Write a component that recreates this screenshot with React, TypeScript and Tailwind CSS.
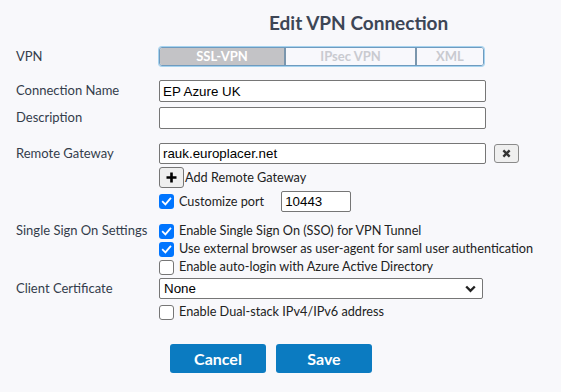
import React from "react";

const labelCls =
  "w-[159px] shrink-0 pl-[16px] text-[13px] text-[#343d4b] font-['Lato',sans-serif]";
const inputCls =
  "h-full border border-[#767676] rounded-[2px] bg-white px-[3px] text-[13.33px] text-black font-['Liberation_Sans',Arial,sans-serif] outline-none";
const optText = "text-[12.7px] text-[#222] font-['Lato',sans-serif] ml-[5px]";

function Check({ checked }: { checked: boolean }) {
  return checked ? (
    <span className="w-[15px] h-[15px] rounded-[3px] bg-[#0075ff] flex items-center justify-center shrink-0">
      <svg width="11" height="11" viewBox="0 0 12 12">
        <path d="M2 6.4 L4.8 9.2 L10.2 2.8" fill="none" stroke="white" strokeWidth="2" strokeLinecap="square" />
      </svg>
    </span>
  ) : (
    <span className="w-[15px] h-[15px] rounded-[3px] bg-white border border-[#767676] shrink-0" />
  );
}

function CheckRow({ checked, label, cls = "h-[18px]" }: { checked: boolean; label: string; cls?: string }) {
  return (
    <div className={`flex items-center ${cls}`}>
      <Check checked={checked} />
      <span className={optText}>{label}</span>
    </div>
  );
}

export default function App() {
  return (
    <div className="w-[561px] h-[392px] bg-[#f8f8fb] font-['Lato',sans-serif] overflow-hidden">
      <h1 className="pt-[11px] pl-[269px] text-[19px] leading-[24px] font-bold text-[#3d4656]">
        Edit VPN Connection
      </h1>

      {/* VPN */}
      <div className="mt-[12px] flex items-center h-[19px]">
        <div className={labelCls}>VPN</div>
        <div className="flex h-full w-[325px] rounded-[3px] border border-[#6f9bbf] shadow-[0_0_0_1px_#a6d3ef] overflow-hidden text-[13px] font-bold">
          <div className="w-[124px] bg-[#c3c3c6] text-white flex items-center justify-center">SSL-VPN</div>
          <div className="w-[131px] border-l-2 border-[#7b96ad] bg-[#f8f8fc] text-[#c9cad0] flex items-center justify-center">
            IPsec VPN
          </div>
          <div className="flex-1 border-l-2 border-[#7b96ad] bg-[#f8f8fc] text-[#c9cad0] flex items-center justify-center">
            XML
          </div>
        </div>
      </div>

      {/* Connection Name */}
      <div className="mt-[14px] flex items-center h-[22px]">
        <div className={labelCls}>Connection Name</div>
        <input className={`${inputCls} w-[327px]`} defaultValue="EP Azure UK" />
      </div>

      {/* Description */}
      <div className="mt-[5px] flex items-center h-[22px]">
        <div className={labelCls}>Description</div>
        <input className={`${inputCls} w-[327px]`} defaultValue="" />
      </div>

      {/* Remote Gateway */}
      <div className="mt-[14px] flex items-start">
        <div className={`${labelCls} h-[21px] flex items-center`}>Remote Gateway</div>
        <div className="flex flex-col">
          <div className="flex items-center h-[21px]">
            <input className={`${inputCls} w-[327px]`} defaultValue="rauk.europlacer.net" />
            <button className="ml-[8px] w-[25px] h-[19px] rounded-[3px] border border-[#8a8a8a] bg-[#efefef] flex items-center justify-center">
              <svg width="9" height="9" viewBox="0 0 10 10">
                <path d="M1.5 1.5 L8.5 8.5 M8.5 1.5 L1.5 8.5" stroke="#333" strokeWidth="2.6" strokeLinecap="butt" />
              </svg>
            </button>
          </div>
          <div className="mt-[3px] flex items-center h-[21px]">
            <button className="w-[25px] h-[21px] rounded-[3px] border border-[#767676] bg-[#efefef] flex items-center justify-center">
              <svg width="11" height="11" viewBox="0 0 11 11">
                <path d="M5.5 0.5 V10.5 M0.5 5.5 H10.5" stroke="#000" strokeWidth="2.6" />
              </svg>
            </button>
            <span className="text-[12.7px] text-[#222] font-['Lato',sans-serif] ml-[1px]">Add Remote Gateway</span>
          </div>
          <div className="mt-[3px] flex items-center h-[21px]">
            <Check checked />
            <span className={optText}>Customize port</span>
            <input
              className={`${inputCls} ml-[17px] w-[70px] h-[20px] text-[13.33px]`}
              defaultValue="10443"
            />
          </div>
        </div>
      </div>

      {/* SSO */}
      <div className="mt-[10px] flex items-start">
        <div className={`${labelCls} h-[18px] flex items-center`}>Single Sign On Settings</div>
        <div className="flex flex-col">
          <CheckRow checked label="Enable Single Sign On (SSO) for VPN Tunnel" />
          <CheckRow checked label="Use external browser as user-agent for saml user authentication" />
          <CheckRow checked={false} label="Enable auto-login with Azure Active Directory" />
        </div>
      </div>

      {/* Client Certificate */}
      <div className="flex items-start">
        <div className={`${labelCls} h-[25px] flex items-center`}>Client Certificate</div>
        <div className="flex flex-col">
          <div className="mt-[2px] w-[324px] h-[21px] border border-[#767676] rounded-[2px] bg-white flex items-center justify-between pl-[4px] pr-[6px]">
            <span className="text-[13.33px] text-black font-['Liberation_Sans',Arial,sans-serif]">None</span>
            <svg width="11" height="8" viewBox="0 0 11 8">
              <path d="M1.2 1.5 L5.5 5.8 L9.8 1.5" fill="none" stroke="#222" strokeWidth="2.4" />
            </svg>
          </div>
          <div className="mt-[4px]">
            <CheckRow checked={false} label="Enable Dual-stack IPv4/IPv6 address" />
          </div>
        </div>
      </div>

      {/* Buttons */}
      <div className="mt-[23px] flex pl-[170px] gap-[10px]">
        <button className="w-[96px] h-[29px] rounded-[3px] bg-[#0b7bc1] text-white text-[16px] font-bold">
          Cancel
        </button>
        <button className="w-[96px] h-[29px] rounded-[3px] bg-[#0b7bc1] text-white text-[16px] font-bold">
          Save
        </button>
      </div>
    </div>
  );
}
